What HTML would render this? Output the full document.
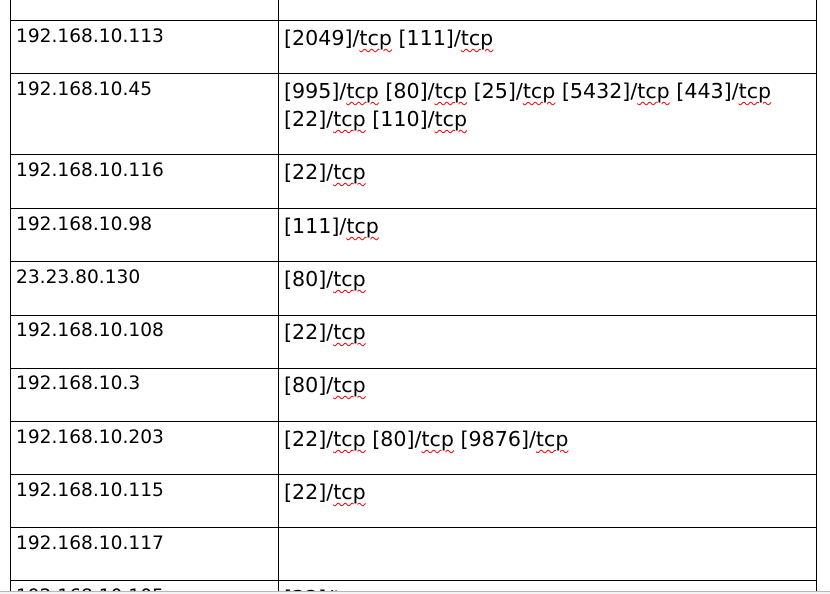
<!DOCTYPE html>
<html style="overflow:hidden;width:830px;height:594px"><head><style>
body{margin:0;width:830px;height:594px;overflow:hidden;background:#fff;position:relative;font-family:"DejaVu Sans",sans-serif;color:#000}
#c{position:absolute;left:0;top:0;width:830px;height:591px;overflow:hidden}
.h{position:absolute;left:10px;width:807px;height:1px;background:#000}
.v{position:absolute;top:0;width:1px;height:591px;background:#000}
.l{position:absolute;left:16px;font-size:18.6px;line-height:22px;white-space:nowrap}
.r{position:absolute;left:284px;font-size:20.6px;line-height:28px;white-space:nowrap}
u{text-decoration:underline wavy #e00;text-decoration-thickness:1px;text-underline-offset:3px}
</style></head><body>
<div id="c">
<div class="v" style="left:10px"></div>
<div class="v" style="left:278px"></div>
<div class="v" style="left:816px"></div>
<div class="h" style="top:20px"></div>
<div class="h" style="top:73px"></div>
<div class="h" style="top:154px"></div>
<div class="h" style="top:208px"></div>
<div class="h" style="top:261px"></div>
<div class="h" style="top:315px"></div>
<div class="h" style="top:368px"></div>
<div class="h" style="top:421px"></div>
<div class="h" style="top:474px"></div>
<div class="h" style="top:527px"></div>
<div class="h" style="top:580px"></div>

<div class="l" style="top:26px">192.168.10.113</div>
<div class="r" style="top:24px">[2049]/<u>tcp</u> [111]/<u>tcp</u></div>
<div class="l" style="top:79px">192.168.10.45</div>
<div class="r" style="top:77px">[995]/<u>tcp</u> [80]/<u>tcp</u> [25]/<u>tcp</u> [5432]/<u>tcp</u> [443]/<u>tcp</u><br>[22]/<u>tcp</u> [110]/<u>tcp</u></div>
<div class="l" style="top:160px">192.168.10.116</div>
<div class="r" style="top:158px">[22]/<u>tcp</u></div>
<div class="l" style="top:214px">192.168.10.98</div>
<div class="r" style="top:212px">[111]/<u>tcp</u></div>
<div class="l" style="top:267px">23.23.80.130</div>
<div class="r" style="top:265px">[80]/<u>tcp</u></div>
<div class="l" style="top:320px">192.168.10.108</div>
<div class="r" style="top:318px">[22]/<u>tcp</u></div>
<div class="l" style="top:373px">192.168.10.3</div>
<div class="r" style="top:371px">[80]/<u>tcp</u></div>
<div class="l" style="top:427px">192.168.10.203</div>
<div class="r" style="top:425px">[22]/<u>tcp</u> [80]/<u>tcp</u> [9876]/<u>tcp</u></div>
<div class="l" style="top:480px">192.168.10.115</div>
<div class="r" style="top:478px">[22]/<u>tcp</u></div>
<div class="l" style="top:533px">192.168.10.117</div>
<div class="l" style="top:586px">192.168.10.105</div>
<div class="r" style="top:584px">[22]/<u>tcp</u></div>
</div>
<div style="position:absolute;left:0;top:591px;width:830px;height:3px;background:#f4f4f4;border-top:1px solid #b8b8b8;box-sizing:border-box"></div>
</body></html>
